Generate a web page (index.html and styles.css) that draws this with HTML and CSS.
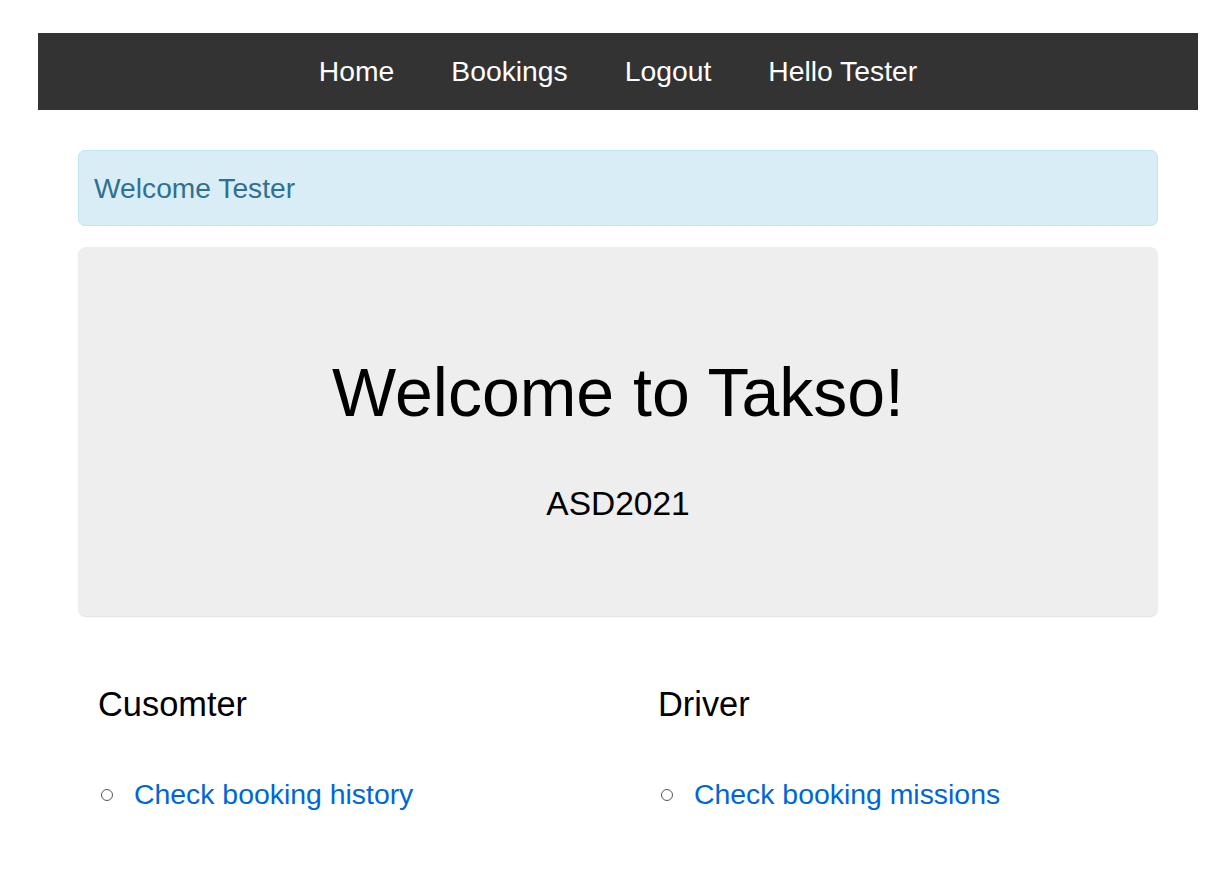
FILE: index.html
```html
<!DOCTYPE html>
<html lang="en">
<head>
<meta charset="utf-8">
<title>Takso</title>
<link rel="stylesheet" href="styles.css">
</head>
<body>
<nav class="navbar">
  <a class="nav-link" href="#">Home</a>
  <a class="nav-link" href="#">Bookings</a>
  <a class="nav-link" href="#">Logout</a>
  <a class="nav-link" href="#">Hello Tester</a>
</nav>
<main class="container">
  <div class="alert">Welcome Tester</div>
  <section class="jumbotron">
    <h1 class="jumbo-title">Welcome to Takso!</h1>
    <p class="jumbo-sub">ASD2021</p>
  </section>
  <div class="row">
    <div class="col">
      <h3 class="col-title">Cusomter</h3>
      <ul class="links">
        <li><a href="#">Check booking history</a></li>
      </ul>
    </div>
    <div class="col">
      <h3 class="col-title">Driver</h3>
      <ul class="links">
        <li><a href="#">Check booking missions</a></li>
      </ul>
    </div>
  </div>
</main>
</body>
</html>
```
FILE: styles.css
```css
* { box-sizing: border-box; }
html, body { margin: 0; padding: 0; background: #fff; }
body {
  font-family: "Liberation Sans", Arial, sans-serif;
  color: #000;
  padding-top: 33px;
}
.navbar {
  margin-left: 38px;
  width: 1160px;
  height: 77px;
  padding-bottom: 2px;
  background: #333;
  display: flex;
  justify-content: center;
  align-items: center;
  gap: 57px;
}
.nav-link {
  color: #fff;
  text-decoration: none;
  font-size: 28.3px;
  line-height: 32px;
}
.container {
  margin-left: 78px;
  width: 1080px;
}
.alert {
  margin-top: 40px;
  height: 76px;
  padding: 21px 15px;
  background: #d9edf7;
  border: 1px solid #bce8f1;
  border-radius: 7px;
  color: #31708f;
  font-size: 28.2px;
  line-height: 32px;
}
.jumbotron {
  margin-top: 21px;
  height: 369px;
  background: #eee;
  border-radius: 8px;
  box-shadow: 0 1px 1px rgba(0,0,0,0.12);
  padding-top: 107px;
  text-align: center;
}
.jumbo-title {
  margin: 0;
  font-size: 68px;
  line-height: 76px;
  font-weight: normal;
}
.jumbo-sub {
  margin: 54px 0 0;
  font-size: 33.5px;
  line-height: 40px;
}
.row {
  display: flex;
  margin: 68px -20px 0;
}
.col {
  width: 560px;
  padding: 0 40px;
}
.col-title {
  margin: 0;
  font-size: 34.4px;
  line-height: 40px;
  font-weight: normal;
}
.links {
  margin: 54px 0 0;
  padding: 0;
  list-style: none;
  font-size: 28.4px;
  line-height: 32px;
}
.links li {
  display: flex;
  align-items: center;
}
.links li::before {
  content: "";
  width: 10px;
  height: 10px;
  margin: 2px 21px 0 3px;
  border: 1px solid #555;
  border-radius: 50%;
  flex: none;
}
.links a {
  color: #0066d6;
  text-decoration: none;
}
```
